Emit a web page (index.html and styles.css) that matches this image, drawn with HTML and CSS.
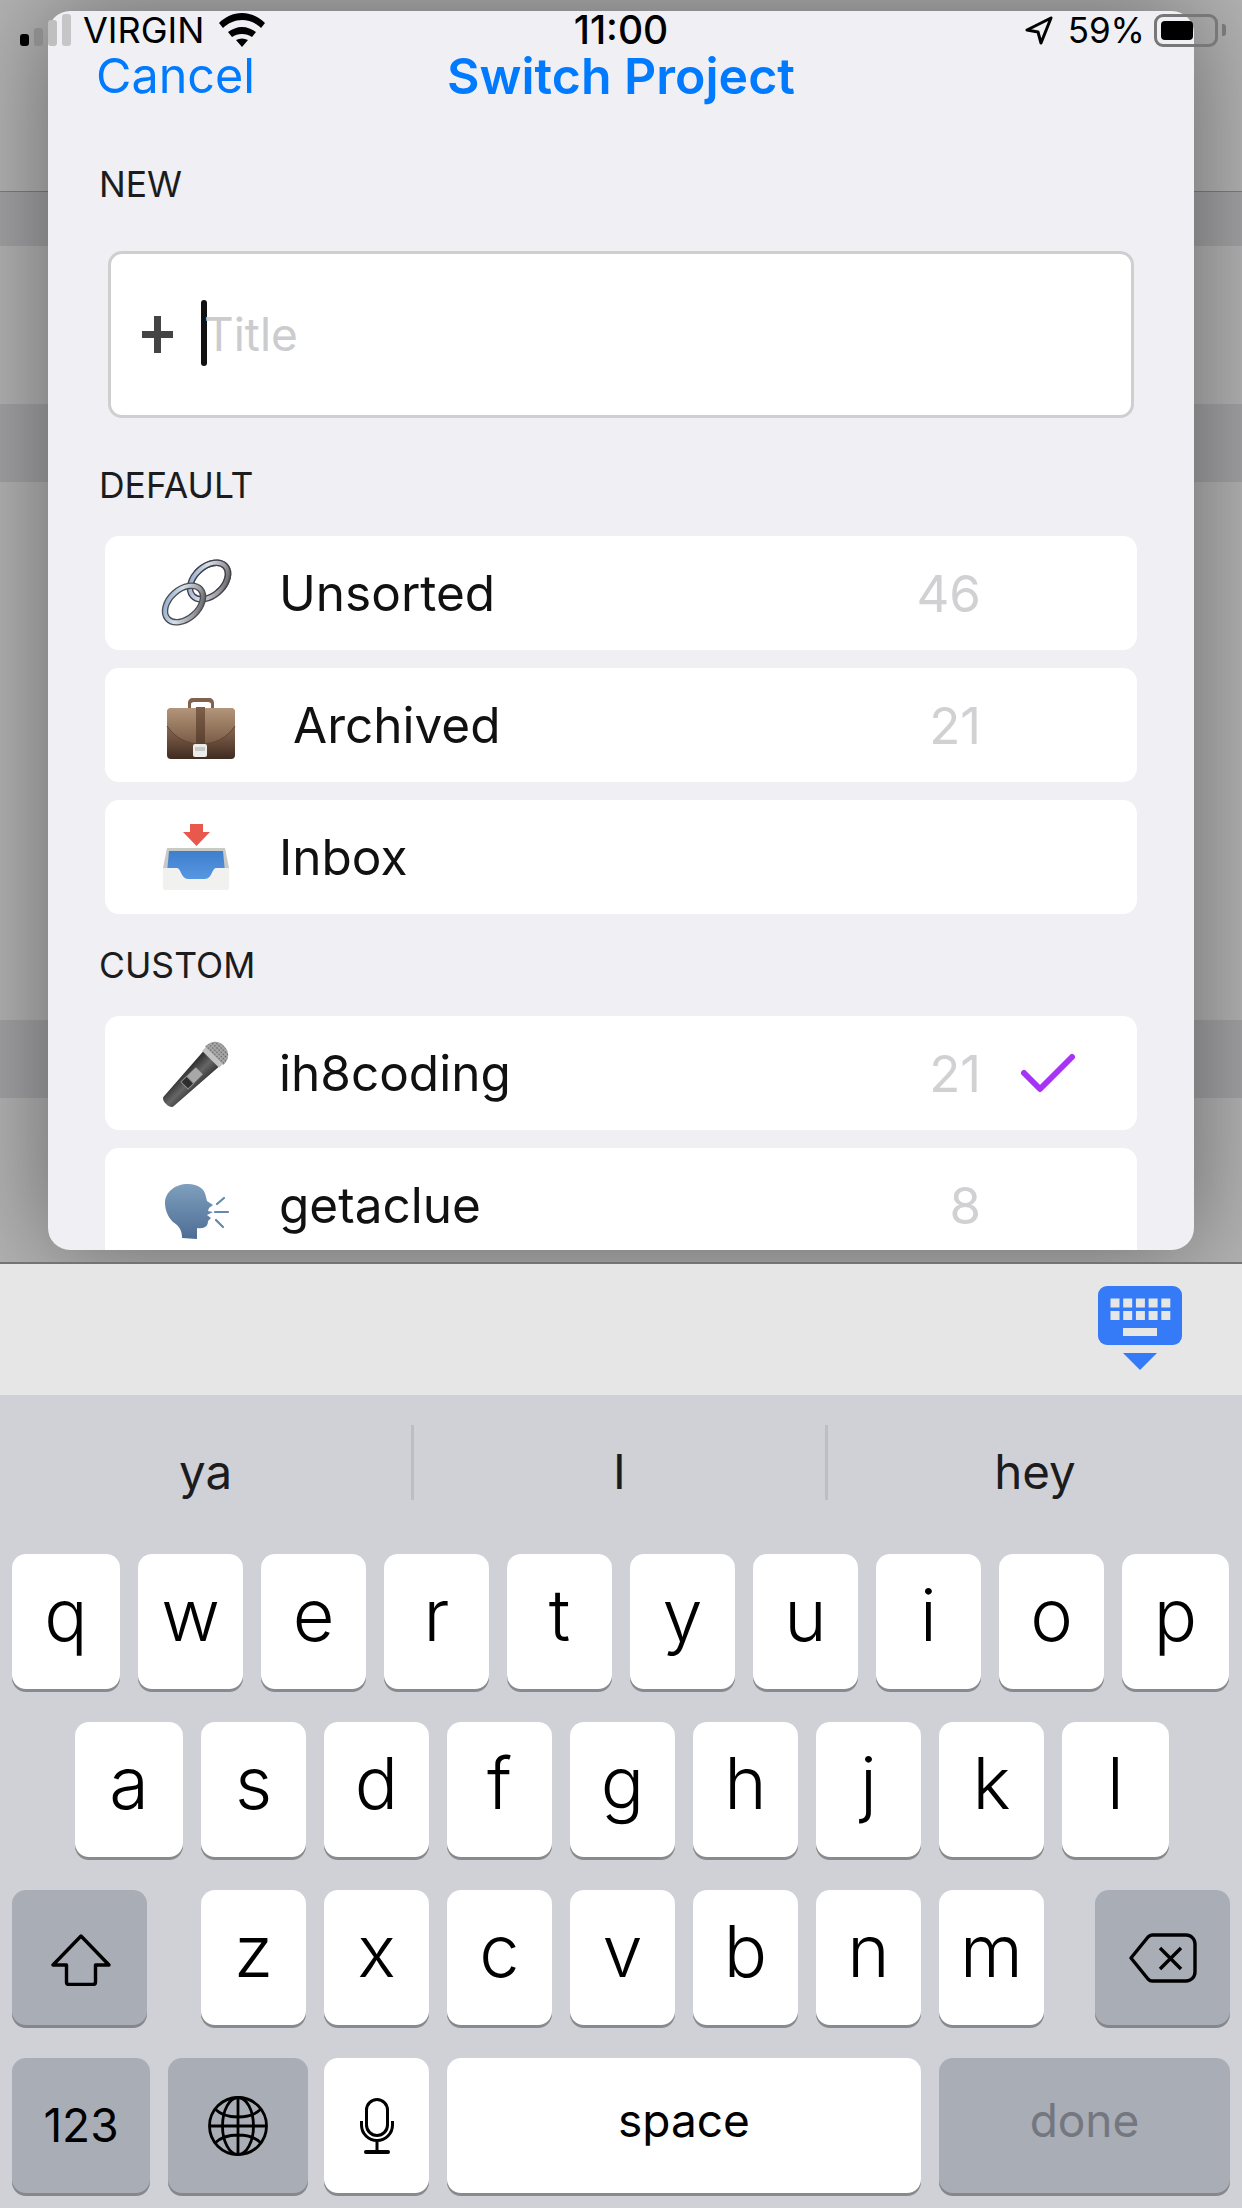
FILE: index.html
```html
<!DOCTYPE html>
<html lang="en">
<head>
<meta charset="utf-8">
<title>Switch Project</title>
<link rel="stylesheet" href="styles.css">
</head>
<body>
<div class="screen">
  <div class="backdrop">
    <div class="band band-top"></div>
    <div class="band band-dark h54"></div>
    <div class="band band-light h158"></div>
    <div class="band band-dark h78"></div>
    <div class="band band-light h538"></div>
    <div class="band band-dark h78"></div>
    <div class="band band-light h164"></div>

    <div class="modal">
      <header class="modal-head">
        <span class="cancel">Cancel</span>
        <span class="modal-title">Switch Project</span>
      </header>

      <div class="label label-new">NEW</div>
      <div class="input">
        <svg class="plus" width="31" height="37" viewBox="0 0 31 37"><path d="M12 0h7v15h12v7H19v15h-7V22H0v-7h12z" fill="#444"/></svg>
        <span class="caret"></span>
        <span class="placeholder">Title</span>
      </div>

      <div class="label label-default">DEFAULT</div>
      <div class="row">
        <svg class="emoji" width="90" height="80" viewBox="0 0 90 80">
          <defs>
            <linearGradient id="ringA" x1="0" y1="0" x2="1" y2="1"><stop offset="0" stop-color="#7f9dc4"/><stop offset=".4" stop-color="#d5e0ec"/><stop offset=".75" stop-color="#9a9a9e"/><stop offset="1" stop-color="#3f3c3e"/></linearGradient>
            <clipPath id="overClip"><rect x="44" y="0" width="46" height="37"/></clipPath>
          </defs>
          <g fill="none">
            <ellipse cx="59" cy="28" rx="22" ry="14.500" transform="rotate(-42 59 28)" stroke="#44404a" stroke-width="6.500"/>
            <ellipse cx="59" cy="28" rx="22" ry="14.500" transform="rotate(-42 59 28)" stroke="url(#ringA)" stroke-width="3.800"/>
            <ellipse cx="34" cy="51" rx="22" ry="14.500" transform="rotate(-42 34 51)" stroke="#4c4e55" stroke-width="6.500"/>
            <ellipse cx="34" cy="51" rx="22" ry="14.500" transform="rotate(-42 34 51)" stroke="url(#ringA)" stroke-width="3.800"/>
            <g clip-path="url(#overClip)">
              <ellipse cx="59" cy="28" rx="22" ry="14.500" transform="rotate(-42 59 28)" stroke="#44404a" stroke-width="6.500"/>
              <ellipse cx="59" cy="28" rx="22" ry="14.500" transform="rotate(-42 59 28)" stroke="url(#ringA)" stroke-width="3.800"/>
            </g>
          </g>
        </svg>
        <span class="name">Unsorted</span>
        <span class="count">46</span>
        <span class="slot"></span>
      </div>
      <div class="row">
        <svg class="emoji" width="90" height="80" viewBox="0 0 90 80">
          <defs>
            <linearGradient id="caseG" x1="0" y1="0" x2="0" y2="1"><stop offset="0" stop-color="#a98a70"/><stop offset=".6" stop-color="#6f5240"/><stop offset="1" stop-color="#3f2b20"/></linearGradient>
            <linearGradient id="flapG" x1="0" y1="0" x2="0" y2="1"><stop offset="0" stop-color="#b3957b"/><stop offset="1" stop-color="#7a5c46"/></linearGradient>
            <linearGradient id="strapG" x1="0" y1="0" x2="0" y2="1"><stop offset="0" stop-color="#7d5f49"/><stop offset="1" stop-color="#5b4030"/></linearGradient>
          </defs>
          <path d="M38 24v-6c0-3 2-5 5-5h16c3 0 5 2 5 5v6h-3v-5c0-1-1-2-3-2H44c-2 0-3 1-3 2v5z" fill="#80634f"/>
          <rect x="17" y="23" width="68" height="51" rx="4" fill="url(#caseG)"/>
          <path d="M17 27c0-2 2-4 4-4h60c2 0 4 2 4 4v14c-8 12-20 18-34 18S25 53 17 41z" fill="url(#flapG)"/>
          <path d="M17 41c8 12 20 18 34 18s26-6 34-18" fill="none" stroke="#5d4433" stroke-width="1"/>
          <rect x="46" y="22" width="9" height="37" fill="url(#strapG)"/>
          <rect x="43" y="59" width="14" height="13" rx="2" fill="#ececea"/>
          <rect x="45" y="62" width="10" height="4" fill="#c9c9c6"/>
        </svg>
        <span class="name name-shift">Archived</span>
        <span class="count">21</span>
        <span class="slot"></span>
      </div>
      <div class="row">
        <svg class="emoji" width="90" height="80" viewBox="0 0 90 80">
          <defs>
            <linearGradient id="trayG" x1="0" y1="0" x2="0" y2="1"><stop offset="0" stop-color="#3f7ecb"/><stop offset="1" stop-color="#5a9ae6"/></linearGradient>
          </defs>
          <path d="M40 7h13v8h7L46.500 29 33 15h7z" fill="#e8584c"/>
          <path d="M17 31h58l4 20H13z" fill="#c9c9c6"/>
          <path d="M19 34h54l3 32H16z" fill="url(#trayG)"/>
          <path d="M13 51h14c4 0 4 11 11 11h17c7 0 7-11 11-11h13v20c0 1-1 2-2 2H15c-1 0-2-1-2-2z" fill="#f1f2ef"/>
        </svg>
        <span class="name">Inbox</span>
        <span class="slot"></span>
      </div>

      <div class="label label-custom">CUSTOM</div>
      <div class="row">
        <svg class="emoji" width="90" height="80" viewBox="0 0 90 80">
          <defs>
            <linearGradient id="micBody" x1="0" y1="0" x2="1" y2="0"><stop offset="0" stop-color="#2a2a2a"/><stop offset=".55" stop-color="#666"/><stop offset="1" stop-color="#383838"/></linearGradient>
            <pattern id="mesh" width="3" height="3" patternUnits="userSpaceOnUse"><rect width="3" height="3" fill="#a8a8a8"/><circle cx="1.500" cy="1.500" r=".8" fill="#5c5c5c"/></pattern>
          </defs>
          <g transform="translate(2 0) rotate(45 65 20)">
            <path d="M54 28h22l-4 60c0 2-2 4-7 4s-7-2-7-4z" fill="url(#micBody)"/>
            <rect x="60" y="45" width="10" height="13" fill="#a8a8a8"/>
            <rect x="60" y="58" width="10" height="8" fill="#2e2e2e" stroke="#8c8c8c" stroke-width="1"/>
            <rect x="53" y="24" width="24" height="5" fill="#c2c2c2"/>
            <path d="M52 24c0-9 5-14 13-14s13 5 13 14z" fill="url(#mesh)"/>
          </g>
        </svg>
        <span class="name">ih8coding</span>
        <span class="count">21</span>
        <span class="slot">
          <svg class="check" width="54" height="40" viewBox="0 0 54 40"><path d="M3 20l16 16L51 4" fill="none" stroke="#a633f5" stroke-width="6" stroke-linecap="round" stroke-linejoin="round"/></svg>
        </span>
      </div>
      <div class="row">
        <svg class="emoji" width="90" height="80" viewBox="0 0 90 80">
          <defs>
            <linearGradient id="headG" x1="0" y1="0" x2="0" y2="1"><stop offset="0" stop-color="#7f9fbd"/><stop offset="1" stop-color="#4d6d95"/></linearGradient>
          </defs>
          <g transform="translate(5 5)">
            <path d="M27 68c0-8-3-12-9-16-5-5-8-12-8-19 0-11 10-19 23-19 10 0 17 5 18 13l1 4 6 4-4 3-1 3 5 1-6 3 4 3-3 3c0 5-3 8-11 7v11z" fill="url(#headG)"/>
            <path d="M62 34l7-6M60 42h13M61 50l7 7" fill="none" stroke="#6688aa" stroke-width="2.200" stroke-linecap="round"/>
          </g>
        </svg>
        <span class="name">getaclue</span>
        <span class="count">8</span>
        <span class="slot"></span>
      </div>
    </div>
  </div>

  <div class="status">
    <div class="status-left">
      <div class="signal">
        <i class="bar b1"></i><i class="bar b2"></i><i class="bar b3"></i><i class="bar b4"></i>
      </div>
      <span class="carrier">VIRGIN</span>
      <svg class="wifi" width="46" height="34" viewBox="0 0 46 34">
        <path d="M0 10C6 4 14 0 23 0s17 4 23 10l-4 5C37 10 30 7 23 7S9 10 4 15z"/>
        <path d="M9 19c4-3 9-5 14-5s10 2 14 5l-4 5c-3-2-6-3-10-3s-7 1-10 3z"/>
        <path d="M17 27c2-1 4-1.500 6-1.500s4 .5 6 1.500l-6 7z"/>
      </svg>
    </div>
    <span class="time">11:00</span>
    <div class="status-right">
      <svg class="arrow" width="28" height="29" viewBox="0 0 28 29"><path d="M26 2L2 14l11 2 3 11z" fill="none" stroke="#000" stroke-width="3" stroke-linejoin="round"/></svg>
      <span class="pct">59%</span>
      <span class="battery"><span class="battery-fill"></span></span>
      <span class="battery-cap"></span>
    </div>
  </div>

  <div class="accessory">
    <svg width="84" height="84" viewBox="0 0 84 84">
      <rect width="84" height="59" rx="9" fill="#357af6"/>
      <g fill="#e6e6e6">
        <rect x="12.500" y="12.500" width="9" height="9"/><rect x="25.200" y="12.500" width="9" height="9"/><rect x="37.900" y="12.500" width="9" height="9"/><rect x="50.600" y="12.500" width="9" height="9"/><rect x="63.300" y="12.500" width="9" height="9"/>
        <rect x="12.500" y="25" width="9" height="9"/><rect x="25.200" y="25" width="9" height="9"/><rect x="37.900" y="25" width="9" height="9"/><rect x="50.600" y="25" width="9" height="9"/><rect x="63.300" y="25" width="9" height="9"/>
        <rect x="25" y="42" width="34" height="8"/>
      </g>
      <path d="M25 67h34L42 84z" fill="#357af6"/>
    </svg>
  </div>

  <div class="keyboard">
    <div class="suggestions">
      <span class="suggestion">ya</span>
      <span class="suggestion">I</span>
      <span class="suggestion">hey</span>
    </div>
    <div class="key-row row-1">
      <span class="key wide-edge">q</span><span class="key">w</span><span class="key">e</span><span class="key">r</span><span class="key">t</span><span class="key">y</span><span class="key">u</span><span class="key">i</span><span class="key">o</span><span class="key wide-end">p</span>
    </div>
    <div class="key-row row-2">
      <span class="key wide-edge">a</span><span class="key">s</span><span class="key">d</span><span class="key">f</span><span class="key">g</span><span class="key">h</span><span class="key">j</span><span class="key">k</span><span class="key wide-end">l</span>
    </div>
    <div class="key-row row-3">
      <span class="key special shift">
        <svg width="60" height="52" viewBox="0 0 60 52"><path d="M30 2L2 31h13.500v17c0 1.500 1 2.500 2.500 2.500h24c1.500 0 2.500-1 2.500-2.500V31H58z" fill="none" stroke="#000" stroke-width="3.400" stroke-linejoin="round"/></svg>
      </span>
      <span class="key">z</span><span class="key">x</span><span class="key">c</span><span class="key">v</span><span class="key">b</span><span class="key">n</span><span class="key">m</span>
      <span class="key special delete">
        <svg width="68" height="50" viewBox="0 0 68 50"><path d="M2 25L19 4c1-1 2-2 4-2h34c5 0 9 4 9 9v28c0 5-4 9-9 9H23c-2 0-3-1-4-2z" fill="none" stroke="#000" stroke-width="3.400" stroke-linejoin="round"/><path d="M31 15l21 21M52 15L31 36" fill="none" stroke="#000" stroke-width="3.400"/></svg>
      </span>
    </div>
    <div class="key-row row-4">
      <span class="key special num small">123</span>
      <span class="key special globe">
        <svg width="60" height="60" viewBox="0 0 60 60"><g fill="none" stroke="#000" stroke-width="2.800"><circle cx="30" cy="30" r="28.500"/><ellipse cx="30" cy="30" rx="15.500" ry="28.500"/><path d="M30 1.500v57M1.500 30h57M7 13c6 6 14 8 23 8s17-2 23-8M7 47c6-6 14-8 23-8s17 2 23 8"/></g></svg>
      </span>
      <span class="key mic">
        <svg width="34" height="56" viewBox="0 0 34 56"><g fill="none" stroke="#000" stroke-width="3"><rect x="6.500" y="1.500" width="21" height="36" rx="10.500"/><path d="M1.500 23v4a15.500 15.500 0 0 0 31 0v-4M17 43v10"/><path d="M6 54h22" stroke-width="4" stroke-linecap="round"/></g></svg>
      </span>
      <span class="key space small">space</span>
      <span class="key special done small">done</span>
    </div>
  </div>
</div>
</body>
</html>
```

FILE: styles.css
```css
* { box-sizing: border-box; }

html, body {
  margin: 0;
  padding: 0;
}

body {
  font-family: Inter, "Liberation Sans", sans-serif;
  color: #111;
}

.screen {
  position: relative;
  width: 1242px;
  height: 2208px;
  overflow: hidden;
  display: flex;
  flex-direction: column;
}

/* dimmed page behind the sheet */
.backdrop {
  position: relative;
  height: 1262px;
  flex: none;
  overflow: hidden;
  display: flex;
  flex-direction: column;
}

.band { flex: none; }
.band-top { height: 192px; background: #b2b2b2; border-bottom: 1px solid #7d7d7d; }
.band-light { background: #b2b2b2; }
.band-dark { background: #a2a2a4; }
.h54 { height: 54px; }
.h78 { height: 78px; }
.h158 { height: 158px; }
.h164 { height: 164px; }
.h538 { height: 538px; }

/* sheet */
.modal {
  position: absolute;
  top: 11px;
  left: 48px;
  width: 1146px;
  height: 1239px;
  overflow: hidden;
  background: #efeff4;
  border-radius: 22px;
  box-shadow: 0 0 100px rgba(0, 0, 0, .42);
  display: flex;
  flex-direction: column;
}

.modal-head {
  flex: none;
  position: relative;
  height: 60px;
  margin-top: 35px;
  display: flex;
  align-items: center;
  justify-content: center;
  color: #007aff;
  line-height: 46px;
}

.cancel {
  position: absolute;
  left: 48px;
  font-size: 48.500px;
  font-weight: 380;
}

.modal-title {
  font-size: 50px;
  font-weight: 600;
}

.label {
  flex: none;
  height: 40px;
  line-height: 40px;
  margin-left: 51px;
  font-size: 35.500px;
  font-weight: 370;
  color: #1c1c1e;
}

.label-new { margin-top: 59px; }
.label-default { margin-top: 48px; margin-bottom: 30px; }
.label-custom { margin-top: 14px; margin-bottom: 30px; }

.input {
  flex: none;
  width: 1026px;
  height: 167px;
  margin: 46px 0 0 60px;
  padding-left: 31px;
  background: #fff;
  border: 3px solid #cfcfcf;
  border-radius: 14px;
  display: flex;
  align-items: center;
}

.plus { flex: none; }

.caret {
  flex: none;
  width: 6px;
  height: 66px;
  margin-left: 28px;
  margin-top: -4px;
  background: #111;
  border-radius: 3px;
}

.placeholder {
  font-size: 46px;
  font-weight: 380;
  margin-left: -3px;
  margin-top: -2px;
  color: #cccccf;
}

.row {
  flex: none;
  width: 1032px;
  height: 114px;
  margin: 0 0 18px 57px;
  padding-left: 45px;
  background: #fff;
  border-radius: 14px;
  display: flex;
  align-items: center;
}

.emoji { flex: none; }

.name {
  flex: 1;
  margin-left: 39px;
  font-size: 49.500px;
  font-weight: 380;
  color: #111;
}

.name-shift { margin-left: 53px; }

.count {
  flex: none;
  font-size: 51px;
  font-weight: 380;
  color: #d1d1d3;
}

.slot {
  flex: none;
  width: 156px;
  display: flex;
  align-items: center;
  padding-left: 40px;
}

/* status bar over the sheet */
.status {
  position: absolute;
  top: 0;
  left: 0;
  width: 1242px;
  height: 60px;
  display: grid;
  grid-template-columns: 1fr auto 1fr;
  align-items: center;
  color: #000;
  font-size: 35px;
  font-weight: 370;
  line-height: 42px;
}

.status-left {
  display: flex;
  align-items: center;
  height: 60px;
  padding-left: 20px;
}

.signal {
  display: flex;
  align-items: flex-end;
  gap: 5px;
  height: 32px;
}

.bar {
  display: block;
  width: 9px;
  border-radius: 3px;
}
.b1 { height: 12px; background: #000; }
.b2 { height: 18px; background: #8b8b8b; }
.b3 { height: 26px; background: #bfbfc0; }
.b4 { height: 32px; background: #c6c6c8; }

.carrier { margin-left: 12px; font-size: 36px; }

.wifi { margin-left: 15px; margin-top: -1px; }

.time { font-size: 39px; font-weight: 500; }

.status-right {
  display: flex;
  align-items: center;
  justify-content: flex-end;
  height: 60px;
  padding-right: 16px;
}

.pct { margin-left: 15px; }

.battery {
  width: 64px;
  height: 33px;
  margin-left: 9px;
  padding: 4px;
  border: 3px solid #777;
  border-radius: 9px;
  display: flex;
}

.battery-fill {
  width: 32px;
  background: #000;
  border-radius: 4px;
}

.battery-cap {
  width: 4px;
  height: 12px;
  margin-left: 4px;
  background: #777;
  border-radius: 0 3px 3px 0;
}

/* accessory bar */
.accessory {
  flex: none;
  height: 133px;
  background: #e6e6e6;
  border-top: 2px solid #747474;
  display: flex;
  justify-content: flex-end;
  padding: 22px 60px 0 0;
}

/* keyboard */
.keyboard {
  flex: 1;
  background: #cfd1d6;
  display: flex;
  flex-direction: column;
}

.suggestions {
  flex: none;
  height: 159px;
  padding-top: 30px;
  display: flex;
  align-items: flex-start;
}

.suggestion {
  flex: none;
  width: 414px;
  height: 75px;
  padding-top: 17px;
  display: flex;
  align-items: center;
  justify-content: center;
  font-size: 47.500px;
  font-weight: 370;
  color: #1c1c1e;
  border-right: 3px solid #bcbec4;
}

.suggestion:last-child { border-right: 0; }

.key-row {
  flex: none;
  height: 136px;
  margin-bottom: 32px;
  display: flex;
  gap: 18px;
}

.row-1 { padding-left: 12px; }
.row-2 { padding-left: 75px; }
.row-3 { padding-left: 12px; }
.row-4 { padding-left: 12px; margin-bottom: 0; }

.key {
  flex: none;
  width: 105px;
  height: 135px;
  padding-bottom: 14px;
  background: #fff;
  border-radius: 14px;
  box-shadow: 0 3px 0 #898a8e;
  display: flex;
  align-items: center;
  justify-content: center;
  font-size: 72px;
  font-weight: 330;
  color: #000;
}

.wide-edge { width: 108px; }
.wide-end { width: 107px; }

.special { background: #a9adb6; box-shadow: 0 3px 0 #85878c; }
.key.small { font-size: 46px; font-weight: 370; }

.shift { width: 135px; margin-right: 36px; padding-bottom: 0; padding-top: 4px; padding-left: 3px; }
.delete { width: 135px; margin-left: 33px; padding-bottom: 0; }
.num { width: 138px; padding-bottom: 2px; padding-top: 0; }
.globe { width: 140px; margin-right: -2px; padding-bottom: 0; }
.mic { padding-bottom: 0; }
.space { width: 474px; padding-bottom: 12px; }
.done { width: 291px; color: #74777f; padding-bottom: 12px; }
```
